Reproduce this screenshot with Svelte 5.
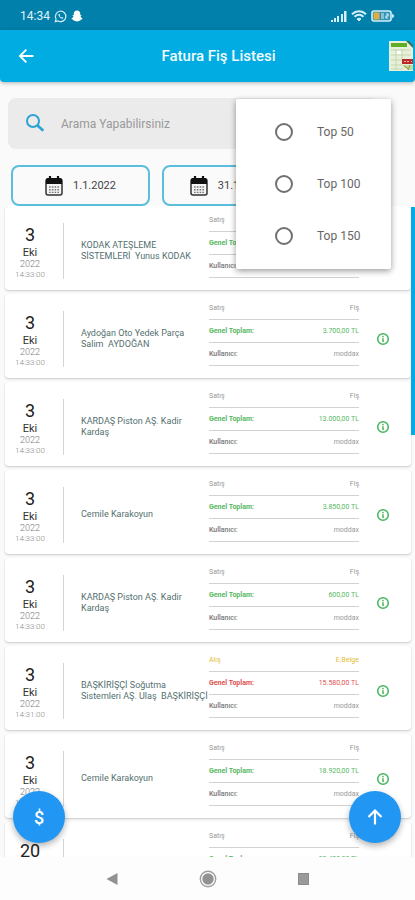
<script lang="ts">
    type Receipt = {
        day: string;
        month: string;
        year: string;
        time: string;
        name: string;
        kind: string;
        doc: string;
        total: string;
        user: string;
        expense?: boolean;
    };

    const date = { day: "3", month: "Eki", year: "2022", time: "14:33:00" };
    const sale = { kind: "Satış", doc: "Fiş", user: "moddax" };

    const receipts: Receipt[] = [
        { ...date, ...sale, name: "KODAK ATEŞLEME\nSİSTEMLERİ  Yunus KODAK", total: "1.250,00 TL" },
        { ...date, ...sale, name: "Aydoğan Oto Yedek Parça\nSalim  AYDOĞAN", total: "3.700,00 TL" },
        { ...date, ...sale, name: "KARDAŞ Piston AŞ. Kadir\nKardaş", total: "13.000,00 TL" },
        { ...date, ...sale, name: "Cemile Karakoyun", total: "3.850,00 TL" },
        { ...date, ...sale, name: "KARDAŞ Piston AŞ. Kadir\nKardaş", total: "600,00 TL" },
        {
            ...date,
            time: "14:31:00",
            name: "BAŞKİRİŞÇİ Soğutma\nSistemleri AŞ. Ulaş  BAŞKİRİŞÇİ",
            kind: "Alış",
            doc: "E.Belge",
            total: "15.580,00 TL",
            user: "moddax",
            expense: true,
        },
        { ...date, ...sale, name: "Cemile Karakoyun", total: "18.920,00 TL" },
        { ...date, ...sale, day: "20", name: "", total: "20.400,00 TL" },
    ];

    const dates = ["1.1.2022", "31.12.2022"];
    const limits = [50, 100, 150];

    let limit: number | null = $state(null);
    let search = $state("");
    let list: HTMLElement;

    function scrollToTop() {
        list.scrollTo({ top: 0, behavior: "smooth" });
    }
</script>

<div class="screen">
    <div class="status">
        <span class="clock">14:34</span>
        <svg width="13" height="13" viewBox="0 0 24 24" fill="none" stroke="#d5eef7" stroke-width="2.2">
            <path d="M2.5 21.5l1.4-5A9.6 9.6 0 1 1 7.600 20.200z" />
            <path d="M8.500 7.500c-1.500 3.500 4 9.500 8 8.500l.5-2-2.500-1.300-1.500 1c-1.200-.6-2-1.500-2.500-2.700l1-1.200-1-2.500z" fill="#d5eef7" stroke="none" />
        </svg>
        <svg width="12" height="12" viewBox="0 0 24 24" fill="#fff">
            <path d="M12 1c4 0 6.500 2.800 6.500 6.500v3l2-.3c.8.8 0 1.800-1.500 2.500 .6 2.200 2 3.600 4 4.300 0 1.500-1.500 2-3.500 2.300l-.7 1.700c-2.300-.3-3.500 2-6.800 2s-4.500-2.300-6.800-2l-.7-1.700C2.500 19 1 18.500 1 17c2-.7 3.400-2.100 4-4.300-1.500-.7-2.300-1.700-1.500-2.500l2 .3v-3C5.500 3.800 8 1 12 1z" />
        </svg>
        <svg class="signal" width="16" height="11" viewBox="0 0 16 11" fill="#d5eef7">
            <rect x="0" y="9" width="2" height="2" />
            <rect x="3" y="7" width="2" height="4" />
            <rect x="6" y="5" width="2" height="6" />
            <rect x="10" y="3" width="2" height="8" />
            <rect x="13" y="0" width="2.500" height="11" />
        </svg>
        <svg width="16" height="12" viewBox="0 0 16 12" fill="none" stroke="#d5eef7" stroke-width="2">
            <path d="M1 4.200C5 .4 11 .4 15 4.200" />
            <path d="M3.500 6.800c2.700-2.400 6.300-2.400 9 0" />
            <path d="M6 9c1.200-1 2.800-1 4 0l-2 2z" fill="#d5eef7" stroke-width="1" />
        </svg>
        <svg width="24" height="12" viewBox="0 0 24 12">
            <rect x="1" y="1" width="19" height="10" rx="2" fill="#2f94b5" stroke="#d5eef7" stroke-width="1.600" />
            <rect x="2.500" y="2.500" width="6" height="7" fill="#e0ad45" />
            <path d="M10 4h3M10 6h3M10 8h3M15 4h2v2h-2v2h2" fill="none" stroke="#d5eef7" stroke-width="1.200" />
            <path d="M21 3.500l2.500 2.500-2.500 2.500z" fill="#d5eef7" />
        </svg>
    </div>

    <header>
        <button aria-label="Geri">
            <svg width="20" height="20" viewBox="0 0 24 24" fill="#fff">
                <path d="M21 10.800v2.400H7.500l5.700 5.700-1.600 1.600L3.100 12l8.500-8.500 1.600 1.600-5.700 5.700z" />
            </svg>
        </button>
        <h1>Fatura Fiş Listesi</h1>
        <button aria-label="Excel">
            <svg width="26" height="32" viewBox="0 0 26 32">
                <path d="M0 1h18l6 6v24H0z" fill="#e8f0dc" />
                <path d="M2 3h16v4H2z" fill="#5fae24" />
                <path d="M17 1h3l4 4v3z" fill="#39734d" />
                <path d="M2 10h20M2 15h20M2 20h11M2 25h11M2 29h12M7 9v21M13 9v11" stroke="#c4d9ad" fill="none" />
                <rect x="8" y="11" width="4" height="3" fill="#fff" />
                <rect x="13" y="19" width="11" height="5" fill="#b92b27" />
                <path d="M15 21.500h2M18 21.500h2M22 21.500h1" stroke="#efb5ad" />
                <path d="M13 25h11v5h-5z" fill="#c7dc9b" />
                <path d="M15 26l5 3M21 25l-2 5" stroke="#8a9c55" />
            </svg>
        </button>
    </header>

    <label class="search">
        <svg width="20" height="20" viewBox="0 0 20 20" fill="none" stroke="#2ba3d4" stroke-width="2">
            <circle cx="8" cy="7" r="6" />
            <path d="M12.300 11.300l6 5.500" stroke-width="2.600" />
        </svg>
        <input type="text" placeholder="Arama Yapabilirsiniz" aria-label="Arama" bind:value={search} />
    </label>

    <div class="dates">
        {#each dates as d}
            <button>
                <svg width="18" height="20" viewBox="0 0 18 20">
                    <rect x="1" y="3" width="16" height="16" rx="2" fill="#f4f4f4" stroke="#333" stroke-width="1.500" />
                    <path d="M1 8V4a2 2 0 0 1 2-2h12a2 2 0 0 1 2 2v4z" fill="#111" />
                    <path d="M5 0v4M13 0v4" stroke="#111" stroke-width="2.200" />
                    <path d="M4 11h10M4 13.700h10M4 16.400h10" stroke="#777" stroke-width="1.400" stroke-dasharray="1.600 1.200" />
                </svg>
                <span>{d}</span>
            </button>
        {/each}
    </div>

    <main bind:this={list}>
        {#each receipts as r}
            <article>
                <div class="date">
                    <span class="day">{r.day}</span>
                    <span class="month">{r.month}</span>
                    <span class="year">{r.year}</span>
                    <span class="time">{r.time}</span>
                </div>
                <p>{r.name}</p>
                <table class:expense={r.expense}>
                    <tbody>
                        <tr class="kind"><td>{r.kind}</td><td>{r.doc}</td></tr>
                        <tr class="total"><th>Genel Toplam:</th><td>{r.total}</td></tr>
                        <tr class="user"><th>Kullanıcı:</th><td>{r.user}</td></tr>
                    </tbody>
                </table>
                <button class="info" aria-label="Detay">
                    <svg width="14" height="14" viewBox="0 0 14 14" fill="none" stroke="#43b45a" stroke-width="1.500">
                        <circle cx="7" cy="7" r="5.300" />
                        <path d="M7 6.300v3.700M7 4v1.300" />
                    </svg>
                </button>
            </article>
        {/each}
        <div class="scrollbar"></div>
    </main>

    <nav>
        <button aria-label="Geri">
            <svg width="12" height="14" viewBox="0 0 12 14" fill="#929292"><path d="M11.500 1v12L.5 7z" /></svg>
        </button>
        <button aria-label="Ana ekran">
            <svg width="18" height="18" viewBox="0 0 18 18">
                <circle cx="9" cy="9" r="7.700" fill="none" stroke="#a0a0a0" stroke-width="1.400" />
                <circle cx="9" cy="9" r="5.700" fill="#929292" />
            </svg>
        </button>
        <button aria-label="Son uygulamalar">
            <svg width="12" height="12" viewBox="0 0 12 12" fill="#9a9a9a" stroke="#8c8c8c"><rect x=".5" y=".5" width="10" height="11" /></svg>
        </button>
    </nav>

    <div class="menu" role="radiogroup" aria-label="Limit">
        {#each limits as n}
            <label>
                <input type="radio" name="limit" value={n} bind:group={limit} />
                <span>Top {n}</span>
            </label>
        {/each}
    </div>

    <button class="fab left" aria-label="Tutar">$</button>
    <button class="fab right" aria-label="Yukarı" onclick={scrollToTop}>
        <svg width="20" height="20" viewBox="0 0 20 20" fill="none" stroke="#fff" stroke-width="2.200">
            <path d="M10 17.500V4M3.500 10L10 3.500l6.500 6.500" />
        </svg>
    </button>
</div>

<style>
    :global(body) {
        margin: 0;
        background: #fafafb;
    }

    .screen {
        position: relative;
        display: flex;
        flex-direction: column;
        height: 100vh;
        overflow: hidden;
        font-family: Roboto, sans-serif;
        color: #333;
    }

    button {
        display: flex;
        align-items: center;
        justify-content: center;
        padding: 0;
        border: 0;
        background: none;
        font-family: inherit;
        cursor: pointer;
    }

    svg {
        display: block;
        flex: none;
    }

    .status {
        display: flex;
        align-items: center;
        gap: 4px;
        height: 30px;
        padding: 2px 20px 0;
        box-sizing: border-box;
        background: #0080ab;
        flex: none;
    }

    .clock {
        font-size: 12px;
        color: #e2f3f9;
    }

    .signal {
        margin-left: auto;
    }

    header {
        display: grid;
        grid-template-columns: 52px 1fr 26px;
        align-items: center;
        height: 52px;
        flex: none;
        background: #00ace2;
        box-shadow: 0 1px 4px rgba(0, 0, 0, 0.3);
        border-radius: 0 0 4px 4px;
    }

    h1 {
        margin: 0;
        padding-right: 4px;
        text-align: center;
        font-size: 15px;
        font-weight: 500;
        line-height: 20px;
        color: #f2fbff;
    }

    .search {
        display: flex;
        align-items: center;
        gap: 16px;
        height: 51px;
        margin: 16px 36px 0 8px;
        padding: 0 17px;
        box-sizing: border-box;
        flex: none;
        border-radius: 8px;
        background: #ebebeb;
    }

    .search input {
        flex: 1;
        min-width: 0;
        padding: 0;
        border: 0;
        outline: none;
        background: none;
        font-family: inherit;
        font-size: 12px;
        color: #333;
    }

    .search input::placeholder {
        color: #999;
        opacity: 1;
    }

    .dates {
        display: flex;
        gap: 12px;
        padding: 16px 11px 0;
        flex: none;
    }

    .dates button {
        width: 139px;
        height: 41px;
        gap: 10px;
        border: 2px solid #5bbedb;
        border-radius: 8px;
        font-size: 11px;
        color: #444;
    }

    main {
        position: relative;
        flex: 1;
        min-height: 0;
        overflow: hidden;
    }

    article {
        display: grid;
        grid-template-columns: 59px 145px 150px 1fr;
        align-items: center;
        height: 84px;
        margin: 0 4px 4px 5px;
        padding-top: 3px;
        box-sizing: border-box;
        border-radius: 4px;
        background: #fff;
        box-shadow: 0 1px 2px rgba(0, 0, 0, 0.2);
    }

    .date {
        display: flex;
        flex-direction: column;
        align-items: center;
        margin-top: 2px;
        padding-right: 8px;
        border-right: 1px solid #d4d4d4;
        height: 56px;
    }

    .day {
        font-size: 18px;
        line-height: 24px;
        color: #222;
    }

    .month {
        font-size: 11px;
        line-height: 12px;
    }

    .year {
        font-size: 9px;
        line-height: 11px;
        font-weight: 300;
        color: #777;
    }

    .time {
        font-size: 8px;
        line-height: 10px;
        font-weight: 300;
        color: #888;
    }

    p {
        margin: 2px 0 0;
        padding-left: 17px;
        white-space: pre;
        font-size: 9px;
        line-height: 11px;
        color: #54706f;
    }

    table {
        align-self: start;
        border-collapse: separate;
        border-spacing: 0;
        width: 100%;
        font-size: 7px;
        line-height: 22px;
        color: #999;
    }

    th,
    td {
        height: 22px;
        padding: 0;
        border-bottom: 1px solid #d2d2d2;
        text-align: left;
    }

    th {
        font-weight: 700;
    }

    td:last-child {
        text-align: right;
    }

    .total {
        color: #58b763;
    }

    .user th {
        font-weight: 500;
        color: #777;
    }

    .expense .kind {
        color: #e3bd35;
    }

    .expense .total {
        color: #e05050;
    }

    .info {
        justify-self: center;
        margin: 2px 5px 0 0;
    }

    .scrollbar {
        position: absolute;
        top: 1px;
        right: 0;
        width: 4px;
        height: 35%;
        background: #00ace2;
    }

    nav {
        display: flex;
        align-items: center;
        justify-content: center;
        gap: 81px;
        height: 43px;
        flex: none;
        background: #fdfdfd;
    }

    .menu {
        position: absolute;
        top: 99px;
        right: 24px;
        width: 155px;
        padding: 7px 0;
        box-sizing: border-box;
        border-radius: 2px;
        background: #fff;
        box-shadow: 0 2px 6px rgba(0, 0, 0, 0.4);
    }

    .menu label {
        display: flex;
        align-items: center;
        gap: 24px;
        height: 52px;
        padding-left: 39px;
        font-size: 12px;
        color: #666;
    }

    .menu input {
        appearance: none;
        width: 18px;
        height: 18px;
        margin: 0;
        box-sizing: border-box;
        border: 2px solid #707070;
        border-radius: 50%;
    }

    .menu input:checked {
        background: radial-gradient(#00ace2 50%, transparent 55%);
    }

    .fab {
        position: absolute;
        bottom: 57px;
        width: 52px;
        height: 52px;
        border-radius: 50%;
        background: #2196f3;
        box-shadow: 0 3px 6px rgba(0, 0, 0, 0.3);
        font-size: 18px;
        font-weight: 500;
        color: #fff;
    }

    .left {
        left: 13px;
    }

    .right {
        right: 14px;
    }
</style>
